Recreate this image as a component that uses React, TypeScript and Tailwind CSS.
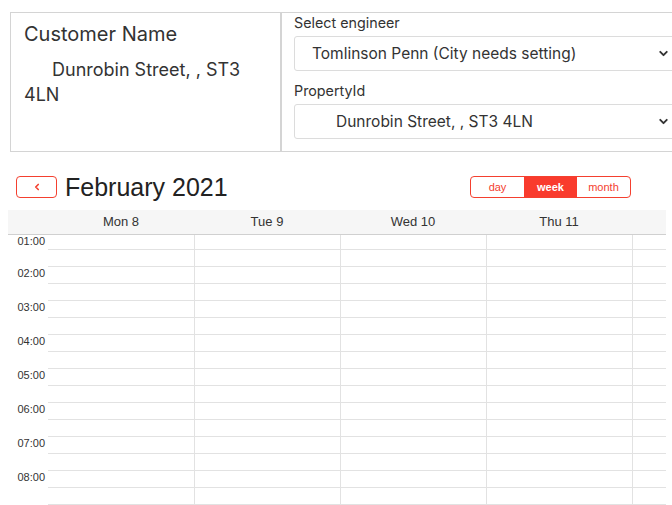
import { ChevronDown, ChevronLeft } from "lucide-react";

const days = ["Mon 8", "Tue 9", "Wed 10", "Thu 11", ""];
const hours = [1, 2, 3, 4, 5, 6, 7, 8, 9];

const FakeSelect = ({ text, indent }: { text: string; indent: string }) => (
  <div className="flex items-center h-[35px] w-[384px] border border-[#dcdcdc] rounded-[3px] bg-white">
    <span className={`flex-1 text-[15.5px] text-[#333] ${indent}`}>{text}</span>
    <ChevronDown size={13} strokeWidth={3.5} className="text-[#333] mr-[7px]" />
  </div>
);

const App = () => {
  return (
    <div className="w-[672px] h-[505px] overflow-hidden bg-white">
      <div className="pt-[12px] pl-[10px] font-['Inter','Open_Sans',sans-serif]">
        <div className="flex w-[700px] h-[140px] border border-[#d4d4d4]">
          <div className="w-[270px] shrink-0 border-r border-[#d4d4d4] pl-[13px] pr-[4px] pt-[8px] text-[#333]">
            <h2 className="text-[20px] leading-[26px]">Customer Name</h2>
            <p className="mt-[10px] text-[18px] leading-[25px] indent-[28px]">
              Dunrobin Street, , ST3 4LN
            </p>
          </div>
          <div className="flex-1 border-l border-[#d4d4d4] pl-[12px] text-[#333]">
            <label className="block text-[14.3px] leading-[20px]">Select engineer</label>
            <div className="mt-[3px]">
              <FakeSelect text="Tomlinson Penn (City needs setting)" indent="pl-[17px]" />
            </div>
            <label className="block mt-[10px] text-[14.3px] leading-[20px]">PropertyId</label>
            <div className="mt-[3px]">
              <FakeSelect text="Dunrobin Street, , ST3 4LN" indent="pl-[41px]" />
            </div>
          </div>
        </div>
      </div>

      <div className="ml-[8px] w-[658px] font-['Liberation_Sans',Arial,sans-serif] text-[#333]">
        <div className="flex items-center h-[22px] mt-[24px] pl-[8px] pr-[35px]">
          <button className="flex items-center justify-center w-[41px] h-[22px] border border-[#f4402f] rounded-[4px] text-[#f4402f]">
            <ChevronLeft size={10} strokeWidth={4} />
          </button>
          <h1 className="ml-[8px] text-[25px] leading-none text-[#222]">February 2021</h1>
          <div className="ml-auto flex h-[22px] border border-[#f4402f] rounded-[4px] overflow-hidden text-[11px]">
            <button className="w-[53px] text-[#f4402f]">day</button>
            <button className="w-[53px] bg-[#f93b2d] text-white font-bold">week</button>
            <button className="w-[53px] text-[#f4402f]">month</button>
          </div>
        </div>

        <div className="mt-[12px] w-[658px] overflow-hidden">
          <div className="flex h-[25px] bg-[#f6f6f6] border-b border-[#d0d0d0]">
            <div className="w-[40px] shrink-0" />
            {days.map((d, i) => (
              <div key={i} className="w-[146px] shrink-0 flex items-center justify-center text-[13px]">
                {d}
              </div>
            ))}
          </div>
          <div className="h-[270px] overflow-hidden">
            {hours.map((h) =>
              [0, 1].map((half) => {
                const first = h === 1 && half === 0;
                return (
                  <div key={`${h}-${half}`} className={first ? "flex h-[14px]" : "flex h-[17px]"}>
                    <div
                      className={
                        first
                          ? "w-[40px] shrink-0 text-right pr-[3px] text-[11px] leading-[12px] whitespace-nowrap"
                          : "w-[40px] shrink-0 text-right pr-[3px] pt-[1px] text-[11px] leading-[12px] whitespace-nowrap"
                      }
                    >
                      {half === 0 && h < 9 ? `0${h}:00` : ""}
                    </div>
                    <div className={first ? "flex" : "flex border-t border-[#e2e2e2]"}>
                      {days.map((_, i) => (
                        <div
                          key={i}
                          className={i === 0 ? "w-[146px] shrink-0" : "w-[146px] shrink-0 border-l border-[#e2e2e2]"}
                        />
                      ))}
                    </div>
                  </div>
                );
              })
            )}
          </div>
        </div>
      </div>
    </div>
  );
};

export default App;
